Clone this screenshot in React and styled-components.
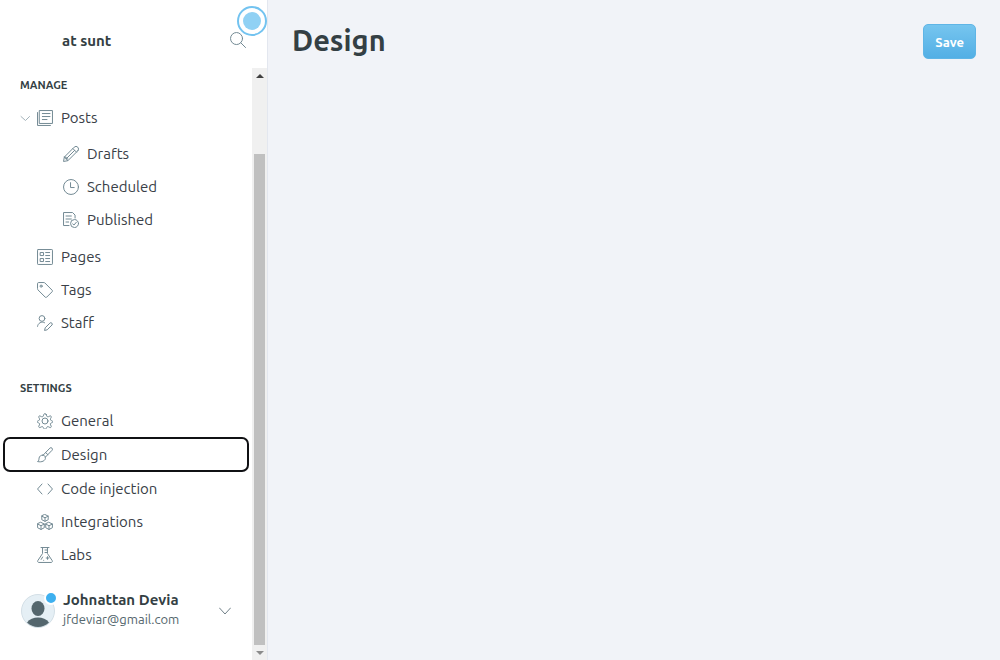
import React from 'react';
import styled, { createGlobalStyle } from 'styled-components';

const GlobalStyle = createGlobalStyle`
  *, *::before, *::after { box-sizing: border-box; }
  body {
    margin: 0;
    background: #f1f3f8;
    color: #343f44;
    font-family: Ubuntu, "Noto Sans", "Open Sans", sans-serif;
    font-size: 15px;
  }
  button { font-family: inherit; cursor: pointer; }
  ul { list-style: none; margin: 0; padding: 0; }
`;

const Layout = styled.div`
  display: flex;
  min-height: 100vh;
`;

const Sidebar = styled.aside`
  display: flex;
  flex-direction: column;
  flex: 0 0 268px;
  background: #fff;
  border-right: 1px solid #e3e7ef;
`;

const SidebarHeader = styled.header`
  position: relative;
  display: flex;
  align-items: center;
  justify-content: space-between;
  height: 68px;
  padding: 12px 21px 0 62px;
`;

const SiteName = styled.div`
  padding-top: 2px;
  font-size: 15px;
  font-weight: 700;
  line-height: 20px;
`;

const PlainButton = styled.button`
  display: flex;
  padding: 0;
  border: 0;
  background: none;
  color: #738a94;
`;

const Beacon = styled.span`
  position: absolute;
  top: 6px;
  right: 0;
  display: flex;
  align-items: center;
  justify-content: center;
  width: 30px;
  height: 30px;
  border: 2px solid #73c3f0;
  border-radius: 50%;
  background: #fff;

  &::after {
    content: "";
    width: 18px;
    height: 18px;
    border-radius: 50%;
    background: #90d1f4;
  }
`;

const SidebarBody = styled.div`
  display: flex;
  flex: 1;
`;

const MenuColumn = styled.div`
  display: flex;
  flex: 1;
  flex-direction: column;
  min-width: 0;
  padding-top: 8px;
`;

const Section = styled.section`
  & + & {
    margin-top: 40px;
  }
`;

const SectionTitle = styled.h2`
  margin: 0;
  padding: 0 20px 7px;
  font-size: 11px;
  font-weight: 600;
  line-height: 18px;
  text-transform: uppercase;
`;

const SubList = styled.ul`
  padding: 3px 0 4px;
`;

const Item = styled.li`
  display: flex;
  align-items: center;
  height: ${({ $current }) => ($current ? 35 : 33)}px;
  margin: 0 3px;
  padding-left: ${({ $nested }) => ($nested ? 43 : 17)}px;
  border-radius: 7px;
  box-shadow: ${({ $current }) => ($current ? 'inset 0 0 0 2px #101114' : 'none')};
`;

const Gutter = styled.span`
  display: flex;
  width: 17px;
`;

const ItemLink = styled.a`
  display: flex;
  flex: 1;
  align-items: center;
  gap: 8px;
  line-height: 33px;
  color: #394047;
  text-decoration: none;
`;

const Icon = styled.svg.attrs({ 'aria-hidden': true })`
  flex: none;
  width: ${({ $size = 16 }) => $size}px;
  height: ${({ $size = 16 }) => $size}px;
  fill: none;
  stroke: ${({ $tone = '#738a94' }) => $tone};
  stroke-width: ${({ $weight = 1.5 }) => $weight};
  stroke-linecap: round;
  stroke-linejoin: round;
`;

const UserMenu = styled.button`
  display: flex;
  align-items: center;
  gap: 8px;
  margin-top: auto;
  padding: 0 21px 28px;
  border: 0;
  background: none;
  color: #343f44;
  text-align: left;
`;

const Avatar = styled.span`
  position: relative;
  display: flex;
`;

const UnreadDot = styled.span`
  position: absolute;
  top: -3px;
  right: -3px;
  width: 14px;
  height: 14px;
  border: 2px solid #fff;
  border-radius: 50%;
  background: #3eb0ef;
`;

const UserText = styled.span`
  display: flex;
  flex: 1;
  flex-direction: column;
  padding-bottom: 4px;
`;

const UserName = styled.strong`
  font-size: 15px;
  line-height: 20px;
`;

const UserEmail = styled.span`
  color: #54666d;
  font-size: 13px;
  line-height: 18px;
`;

const ScrollTrack = styled.div`
  display: flex;
  flex: 0 0 15px;
  flex-direction: column;
  align-items: center;
  background: #f0f0f0;
`;

const ScrollArrow = styled.span`
  display: flex;
  align-items: center;
  justify-content: center;
  height: 15px;

  &::after {
    content: "";
    border: 4px solid transparent;
    border-top: ${({ $up }) => ($up ? '0' : '4px solid #8b8b8b')};
    border-bottom: ${({ $up }) => ($up ? '4px solid #404040' : '0')};
  }
`;

const ScrollRail = styled.div`
  display: grid;
  flex: 1;
  grid-template-rows: 71fr 491fr;
`;

const ScrollThumb = styled.div`
  grid-row: 2;
  width: 11px;
  background: #c0c0c0;
`;

const Main = styled.main`
  flex: 1;
  min-width: 0;
`;

const PageHeader = styled.header`
  display: flex;
  align-items: flex-start;
  justify-content: space-between;
  padding: 24px;
`;

const PageTitle = styled.h1`
  margin: 0;
  font-size: 29px;
  font-weight: 700;
  line-height: 32px;
`;

const SaveButton = styled.button`
  height: 35px;
  padding: 0 11px;
  border: 1px solid #5fb5e6;
  border-radius: 5px;
  background: linear-gradient(#76c5ef, #53afe5);
  color: #fff;
  font-size: 13px;
  font-weight: 600;
`;

const icons = {
  posts: (
    <>
      <path d="M4 .8h19.2v19.4H4z" />
      <path d="M.8 3.8v19.4h19.4M8 5.3h11.5M8 9.8h11.5M8 14.3h7" />
    </>
  ),
  drafts: (
    <>
      <path d="M22.2 7.2L7.4 22l-6.6 1.2L2 16.6 16.8 1.8a3.8 3.8 0 0 1 5.4 5.4z" />
      <path d="M14.8 3.8l5.4 5.4M2 16.6l5.4 5.4M17.5 6.5L4.7 19.3M2.2 16.6l2.6.2.2 2.3 2.3.3" />
    </>
  ),
  scheduled: (
    <>
      <circle cx="12" cy="12" r="11.2" />
      <path d="M11.3 5.5v7.3h5.5" />
    </>
  ),
  published: (
    <>
      <path d="M9 20.3H.8V.8h13.5l3.8 3.8V9M4.5 6h8M4.5 10.5h8M4.5 15h4" />
      <circle cx="17.3" cy="17.3" r="6" />
      <path d="M14.4 17.6l2 2 3.7-4.3" />
    </>
  ),
  pages: (
    <>
      <rect x=".8" y=".8" width="22.4" height="22.4" rx="1" />
      <path d="M5.3 5.3h4.5v4.5H5.3zM5.3 14.3h4.5v4.5H5.3zM13 5.3h6M13 9.8h6M13 14.3h6M13 18.8h6" />
    </>
  ),
  tags: (
    <>
      <path d="M.8 2.2C.8 1.4 1.4.8 2.2.8h8.2c.6 0 1 .2 1.4.6l11 11c.6.6.6 1.5 0 2.1l-8.3 8.3c-.6.6-1.5.6-2.1 0l-11-11a2 2 0 0 1-.6-1.400z" />
      <circle cx="6.2" cy="6.2" r="1.6" />
    </>
  ),
  staff: (
    <>
      <circle cx="7.500" cy="5.200" r="4.300" />
      <path d="M.8 17a6.900 6.900 0 0 1 10.500-5.500M22.300 15.200l-7 7-4 1 1-4 7-7a2.100 2.100 0 0 1 3 3z" />
    </>
  ),
  general: (
    <>
      <circle cx="12" cy="12" r="4.500" />
      <path d="M13.800 2.200l.7 2.100a2 2 0 0 0 2.800 1.200l2-1a1.500 1.500 0 0 1 2 2l-1 2a2 2 0 0 0 1.200 2.800l1.200.4a1.500 1.500 0 0 1 0 2.800l-1.200.4a2 2 0 0 0-1.200 2.800l1 2a1.500 1.500 0 0 1-2 2l-2-1a2 2 0 0 0-2.800 1.200l-.7 1.200a1.900 1.900 0 0 1-3.600 0l-.7-1.200a2 2 0 0 0-2.800-1.200l-2 1a1.500 1.500 0 0 1-2-2l1-2a2 2 0 0 0-1.200-2.800l-1.200-.4a1.500 1.500 0 0 1 0-2.800l1.200-.4a2 2 0 0 0 1.200-2.800l-1-2a1.500 1.500 0 0 1 2-2l2 1a2 2 0 0 0 2.800-1.200l.7-2.100a1.900 1.900 0 0 1 3.600 0z" />
    </>
  ),
  design: (
    <>
      <path d="M9.200 12.200L19.300 1.700a2.300 2.300 0 0 1 3.300 3.200L12.400 15.400" />
      <path d="M8.800 12.200c2.300.2 3.800 1.700 3.900 3.700.2 4.600-5.400 7.500-11.900 5.900 2.200-1.100 2-2.700 2.300-5.100.3-2.800 2.900-4.800 5.700-4.500zM13 8.400l3.300 3.100" />
    </>
  ),
  code: <path d="M7.500 4.500L.8 12l6.700 7.500M16.500 4.500l6.700 7.500-6.700 7.500" />,
  integrations: (
    <>
      <path d="M12 .8l4.800 2.400v5.400L12 11 7.200 8.600V3.200zM7.200 3.200L12 5.700l4.800-2.500M12 5.700V11" />
      <path d="M6 12.600l4.900 2.400v5.600L6 23.200.9 20.600V15zM.9 15L6 17.600l4.900-2.600M6 17.600v5.600" />
      <path d="M18 12.600l5.100 2.400v5.600L18 23.200l-4.900-2.600V15zM13.100 15l4.900 2.600 5.100-2.600M18 17.600v5.600" />
    </>
  ),
  labs: (
    <>
      <path d="M6 .8h12M8.300.8v9L1.200 20.400a1.800 1.800 0 0 0 1.500 2.800h18.600a1.800 1.800 0 0 0 1.500-2.800L15.700 9.800v-9M12 4.500h3.500M12 8.300h3.500" />
      <path d="M15.800 14.500v4M13.800 16.500h4M8.500 15l-2.200 3.600M10 20h.1" />
    </>
  ),
  search: (
    <>
      <circle cx="9.800" cy="9.800" r="9" />
      <path d="M16.300 16.300l7 7" />
    </>
  ),
};

const subPosts = [
  ['Drafts', 'drafts'],
  ['Scheduled', 'scheduled'],
  ['Published', 'published'],
];

const manage = [
  ['Pages', 'pages'],
  ['Tags', 'tags'],
  ['Staff', 'staff'],
];

const settings = [
  ['General', 'general'],
  ['Design', 'design'],
  ['Code injection', 'code'],
  ['Integrations', 'integrations'],
  ['Labs', 'labs'],
];

function Glyph({ name }) {
  return <Icon viewBox="0 0 24 24">{icons[name]}</Icon>;
}

function MenuItem({ label, icon, nested, current }) {
  return (
    <Item $nested={nested} $current={current}>
      <Gutter />
      <ItemLink href={`#${icon}`} aria-current={current ? 'page' : undefined}>
        <Glyph name={icon} />
        {label}
      </ItemLink>
    </Item>
  );
}

export default function App() {
  return (
    <>
      <GlobalStyle />
      <Layout>
        <Sidebar>
          <SidebarHeader>
            <SiteName>at sunt</SiteName>
            <PlainButton aria-label="Search">
              <Glyph name="search" />
            </PlainButton>
            <Beacon />
          </SidebarHeader>
          <SidebarBody>
            <MenuColumn>
              <nav>
                <Section>
                  <SectionTitle>Manage</SectionTitle>
                  <ul>
                    <Item>
                      <Gutter>
                        <PlainButton aria-label="Collapse posts">
                          <Icon viewBox="0 0 10 10" $size={10} $weight={1} $tone="#a4b3ba">
                            <path d="M1 3.500l4.500 4 4-4" />
                          </Icon>
                        </PlainButton>
                      </Gutter>
                      <ItemLink href="#posts">
                        <Glyph name="posts" />
                        Posts
                      </ItemLink>
                    </Item>
                    <li>
                      <SubList>
                        {subPosts.map(([label, icon]) => (
                          <MenuItem key={icon} label={label} icon={icon} nested />
                        ))}
                      </SubList>
                    </li>
                    {manage.map(([label, icon]) => (
                      <MenuItem key={icon} label={label} icon={icon} />
                    ))}
                  </ul>
                </Section>
                <Section>
                  <SectionTitle>Settings</SectionTitle>
                  <ul>
                    {settings.map(([label, icon]) => (
                      <MenuItem key={icon} label={label} icon={icon} current={icon === 'design'} />
                    ))}
                  </ul>
                </Section>
              </nav>
              <UserMenu>
                <Avatar>
                  <svg width="34" height="34" viewBox="0 0 34 34" aria-hidden="true">
                    <circle cx="17" cy="17" r="16.500" fill="#e5eff5" stroke="#d3dfe6" />
                    <ellipse cx="17" cy="14.500" rx="6.500" ry="7.500" fill="#54666d" />
                    <path d="M6 28.500c2.500-3.500 6.500-5 11-5s8.500 1.500 11 5A16 16 0 0 1 17 33a16 16 0 0 1-11-4.500z" fill="#54666d" />
                  </svg>
                  <UnreadDot />
                </Avatar>
                <UserText>
                  <UserName>Johnattan Devia</UserName>
                  <UserEmail>jfdeviar@gmail.com</UserEmail>
                </UserText>
                <Icon viewBox="0 0 12 12" $size={12} $weight={1} $tone="#6f7f87">
                  <path d="M.5 3l5.500 6 5.500-6" />
                </Icon>
              </UserMenu>
            </MenuColumn>
            <ScrollTrack aria-hidden="true">
              <ScrollArrow $up />
              <ScrollRail>
                <ScrollThumb />
              </ScrollRail>
              <ScrollArrow />
            </ScrollTrack>
          </SidebarBody>
        </Sidebar>
        <Main>
          <PageHeader>
            <PageTitle>Design</PageTitle>
            <SaveButton type="button">Save</SaveButton>
          </PageHeader>
        </Main>
      </Layout>
    </>
  );
}
